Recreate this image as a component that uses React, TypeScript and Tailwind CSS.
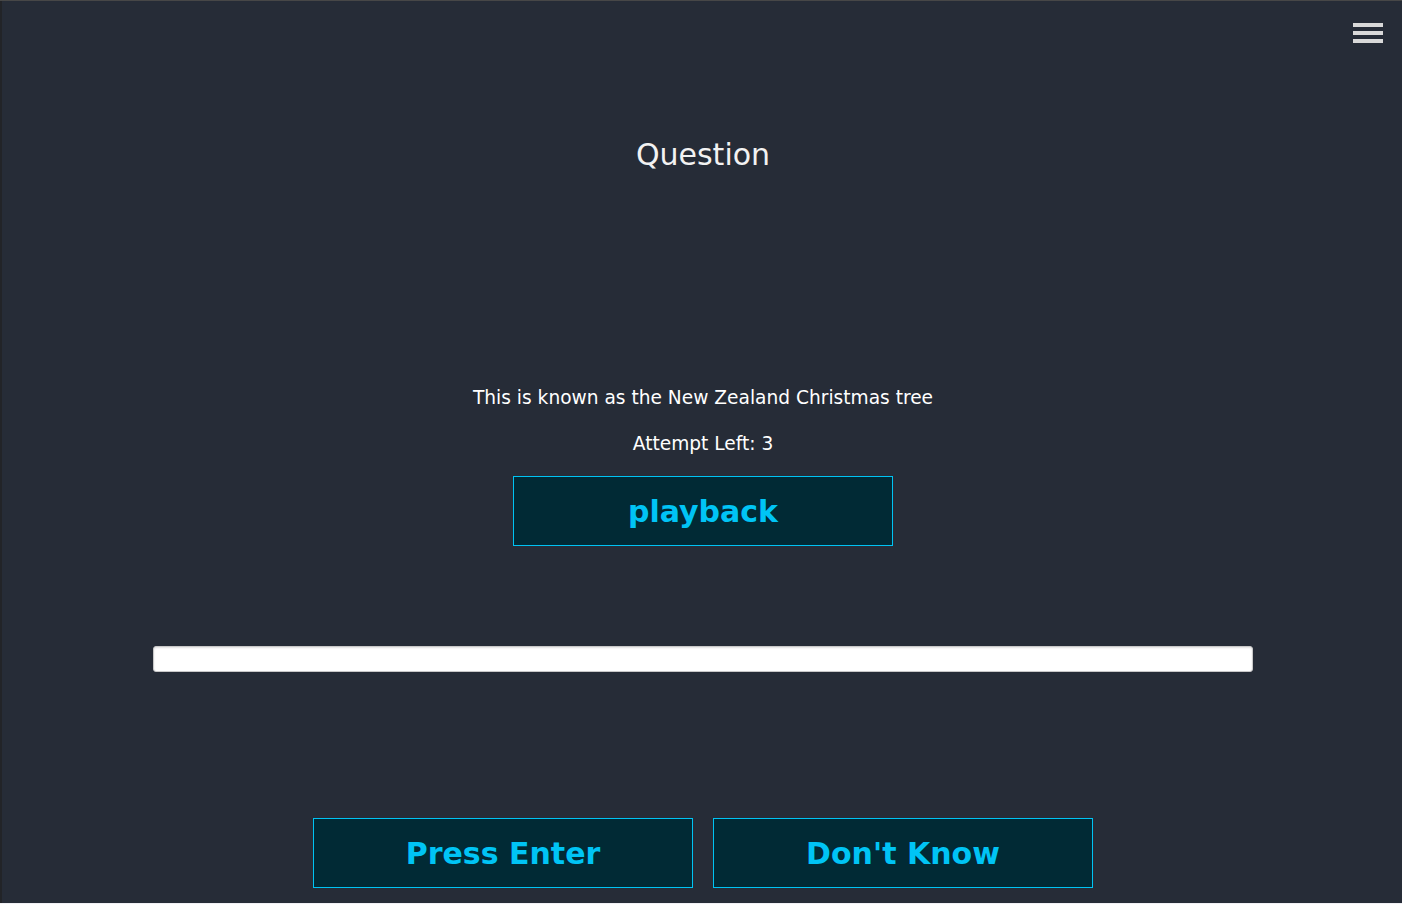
import React from "react"

const font = { fontFamily: '"DejaVu Sans", "Liberation Sans", sans-serif' }

/**
 * Bordered action button used by the quiz
 */
const QuizButton: React.FC<{ label: string }> = ({ label }) => (
  <button className="w-[380px] h-[70px] pt-[2px] bg-[#012a35] border border-[#00c3f3] text-[#00c4f5] text-[30px] font-bold leading-none">
    {label}
  </button>
)

const App: React.FC = () => {
  return (
    <div className="h-[904px] w-full flex flex-col bg-[#262c37] overflow-hidden" style={font}>
      <div className="h-[1px] bg-[#474747]" />
      <div className="flex flex-1">
        <div className="w-[2px] bg-[#222428]" />
        <div className="flex-1 flex flex-col items-center pl-[2px]">
          {/* header with menu icon */}
          <div className="w-full flex justify-end pt-[22px] pr-[19px]">
            <div className="flex flex-col gap-[4px]">
              <span className="block w-[30px] h-[4px] bg-[#d9d9d9]" />
              <span className="block w-[30px] h-[4px] bg-[#d9d9d9]" />
              <span className="block w-[30px] h-[4px] bg-[#d9d9d9]" />
            </div>
          </div>

          <h1 className="mt-[94px] text-[30px] leading-[36px] text-[#f2f2f2]">Question</h1>

          <p className="mt-[213px] text-[18.6px] leading-[24px] text-white">
            This is known as the New Zealand Christmas tree
          </p>
          <p className="mt-[22px] text-[18.6px] leading-[24px] text-white">Attempt Left: 3</p>

          <div className="mt-[20px]">
            <QuizButton label="playback" />
          </div>

          <input
            type="text"
            className="mt-[100px] w-[1100px] h-[26px] bg-white rounded-[3px] border border-[#c8c8c8] shadow-[inset_0_1px_2px_rgba(0,0,0,0.12)] outline-none px-2"
          />

          <div className="mt-[146px] flex gap-[20px]">
            <QuizButton label="Press Enter" />
            <QuizButton label="Don't Know" />
          </div>
        </div>
      </div>
      <div className="h-[1px] bg-[#f0f0f4]" />
    </div>
  )
}

export default App
